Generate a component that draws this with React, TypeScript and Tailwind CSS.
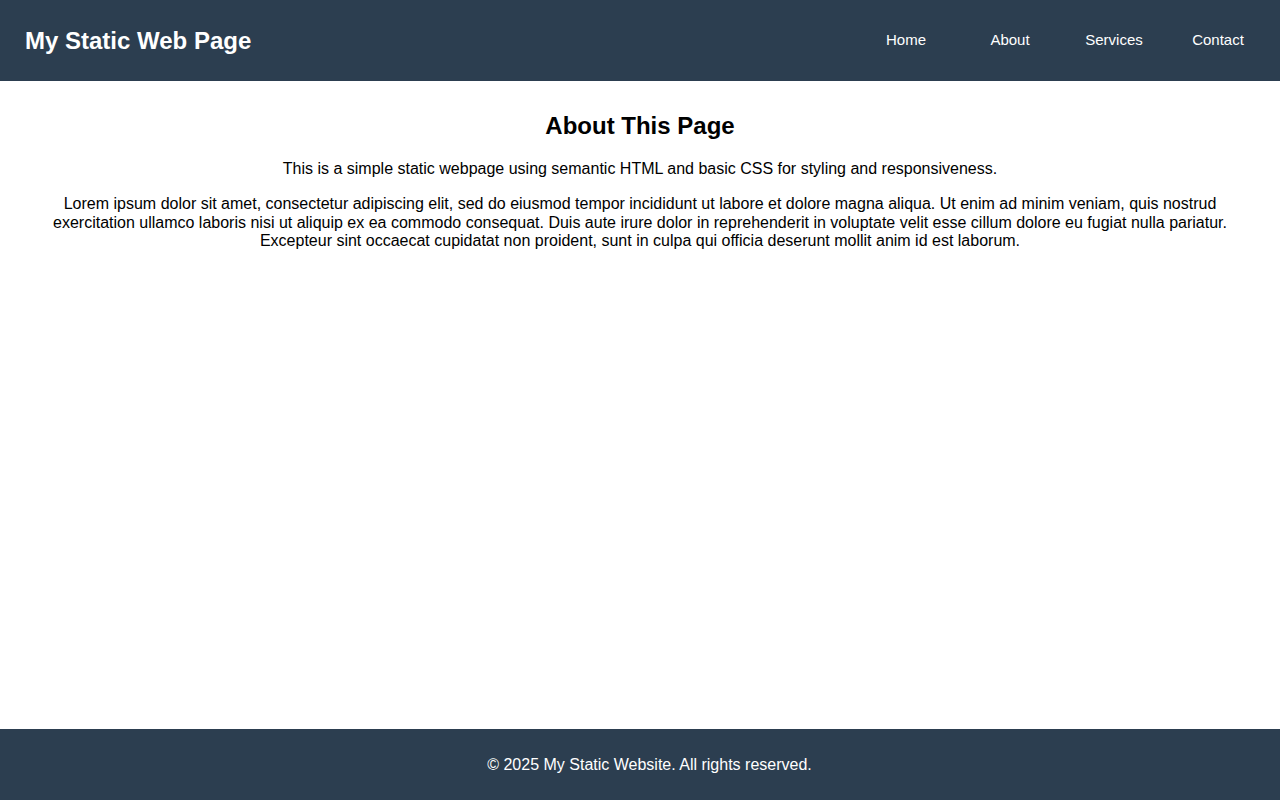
export default function App() {
  const links = ["Home", "About", "Services", "Contact"];

  return (
    <div
      className="min-h-screen flex flex-col bg-white text-black"
      style={{ fontFamily: '"Liberation Sans", Arial, sans-serif' }}
    >
      {/* Header */}
      <header className="h-[81px] bg-[#2c3e50] text-white flex items-center justify-between pl-[25px] pr-[10px]">
        <h1 className="text-[24px] font-bold leading-[28px]">My Static Web Page</h1>
        <nav className="mb-[2px]">
          <ul className="flex">
            {links.map((l) => (
              <li key={l} className="w-[104px] text-center">
                <a href="#" className="text-[15px] leading-[18px] text-white">
                  {l}
                </a>
              </li>
            ))}
          </ul>
        </nav>
      </header>

      {/* Main content */}
      <main className="flex-1 px-[40px] pt-[31px] text-center">
        <h2 className="text-[24px] font-bold leading-[28px] mb-[20px]">About This Page</h2>
        <p className="text-[16px] leading-[18.4px] mb-[17px]">
          This is a simple static webpage using semantic HTML and basic CSS for styling and responsiveness.
        </p>
        <p className="text-[16px] leading-[18.4px]">
          Lorem ipsum dolor sit amet, consectetur adipiscing elit, sed do eiusmod tempor incididunt ut labore et
          dolore magna aliqua. Ut enim ad minim veniam, quis nostrud exercitation ullamco laboris nisi ut aliquip ex
          ea commodo consequat. Duis aute irure dolor in reprehenderit in voluptate velit esse cillum dolore eu
          fugiat nulla pariatur. Excepteur sint occaecat cupidatat non proident, sunt in culpa qui officia deserunt
          mollit anim id est laborum.
        </p>
      </main>

      {/* Footer */}
      <footer className="h-[71px] bg-[#2c3e50] text-white flex items-center justify-center pl-[19px]">
        <p className="text-[16px] leading-[18px]">© 2025 My Static Website. All rights reserved.</p>
      </footer>
    </div>
  );
}
